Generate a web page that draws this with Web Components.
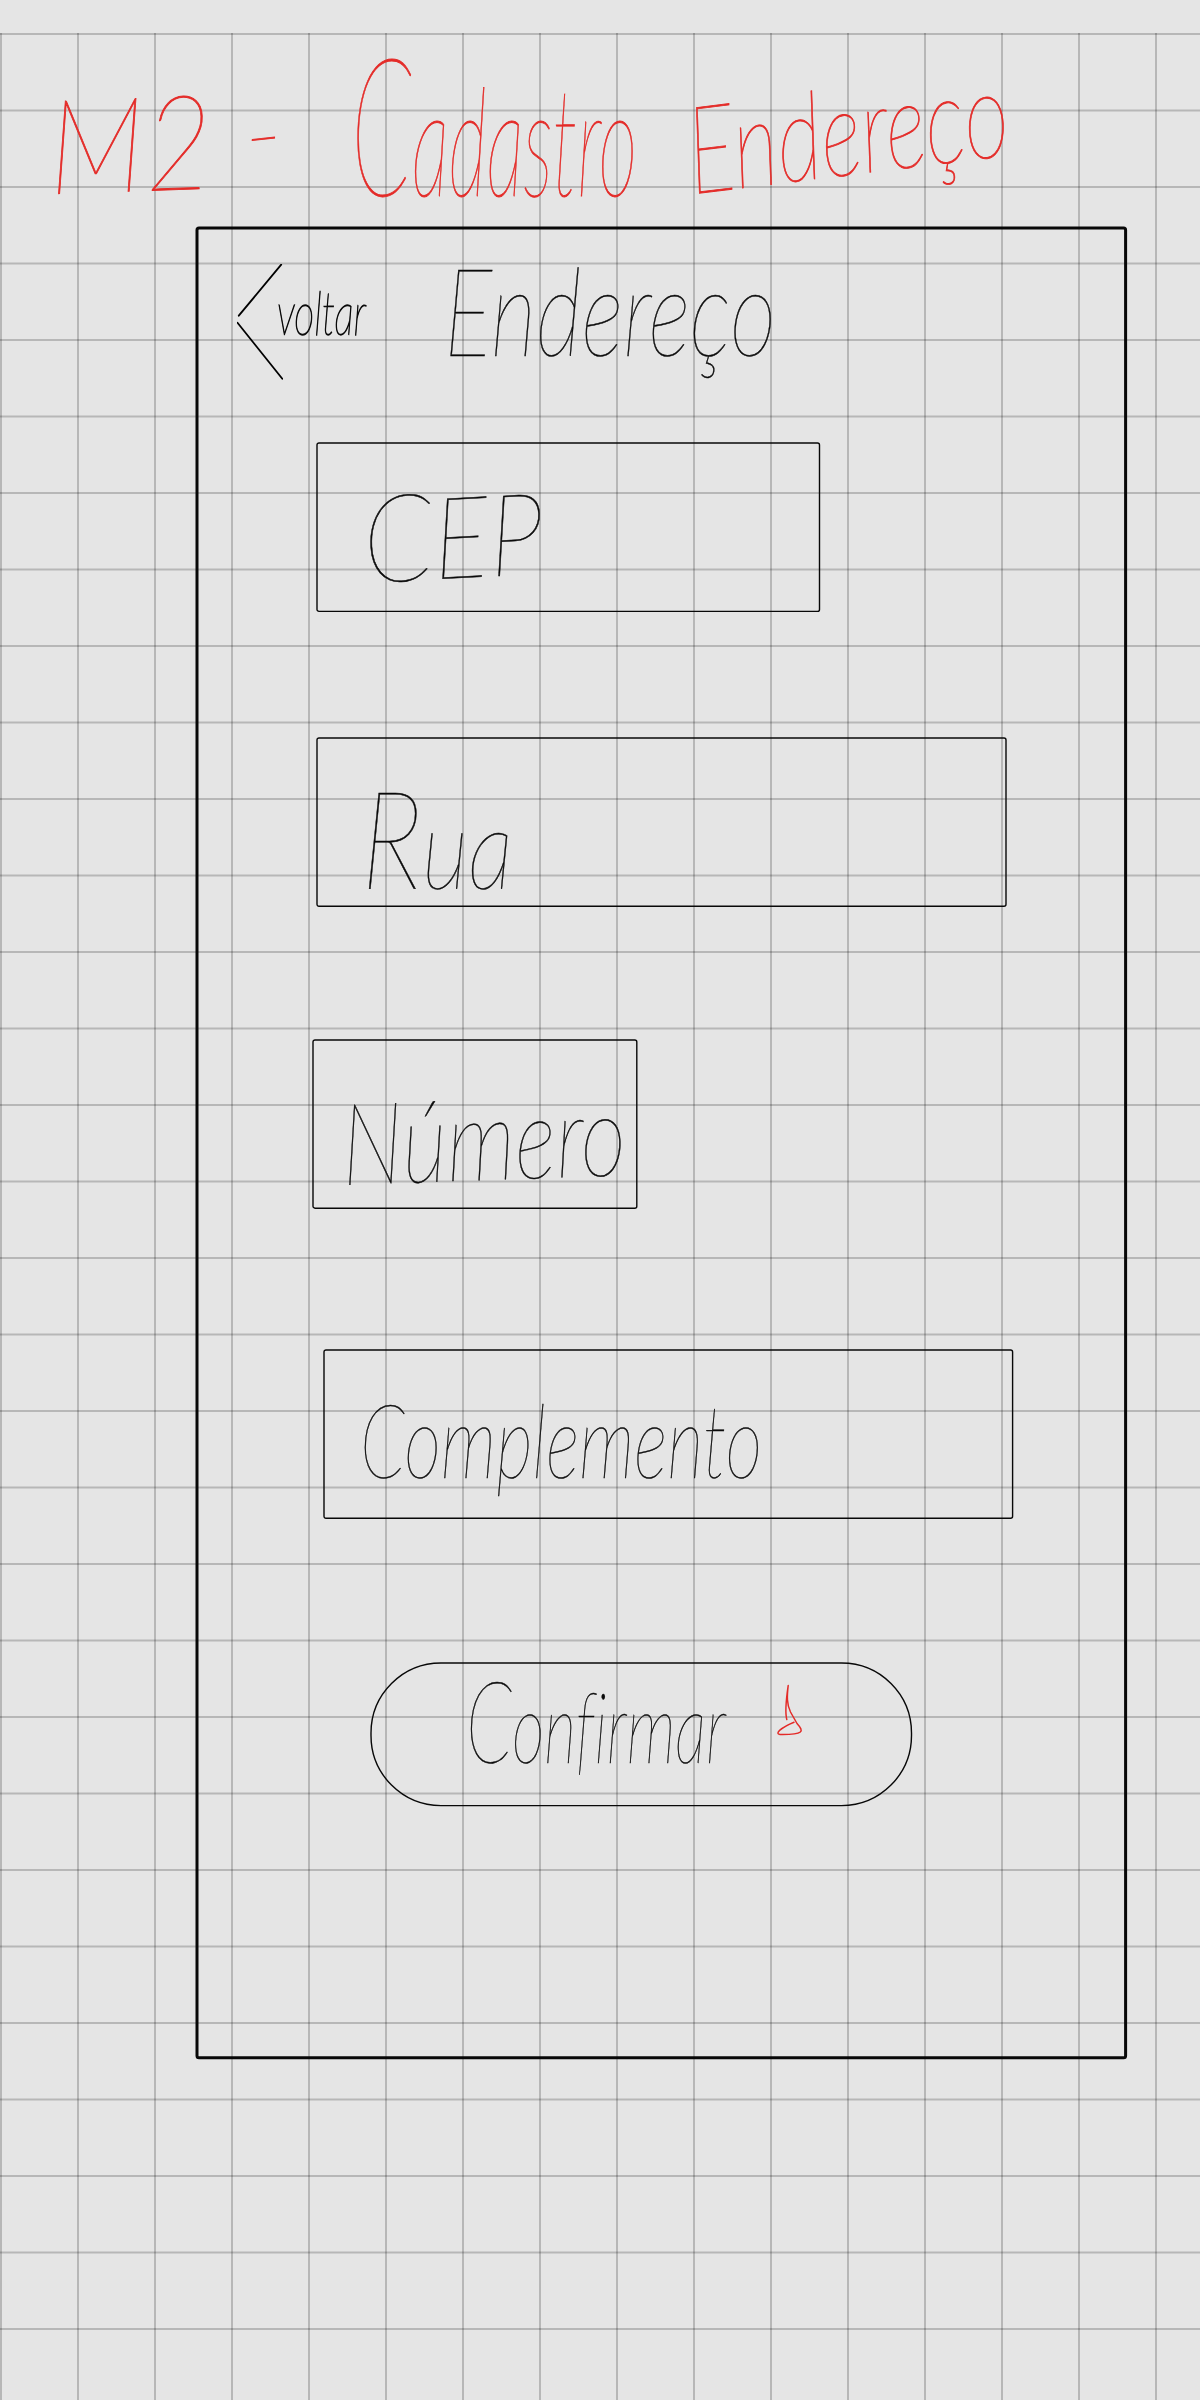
<!DOCTYPE html>
<html lang="pt-BR">
<head>
<meta charset="utf-8">
<title>M2 - Cadastro Endereço</title>
<style>
body{margin:0;background:#e5e5e5}
</style>
</head>
<body>
<address-board></address-board>
<script>
// One handwritten word, fitted to its box width; "cap" sizes its initial apart.
customElements.define('ink-word', class extends HTMLElement {
  connectedCallback() {
    const a = n => this.getAttribute(n);
    const word = a('word');
    const text = a('cap') ? `<tspan font-size="${a('cap')}">${word[0]}</tspan>${word.slice(1)}` : word;
    this.attachShadow({mode: 'open'}).innerHTML = `<style>
      :host{display:block;flex:none;width:${a('w')}px;height:${a('h')}px}
      svg{display:block;overflow:visible}
      text{font-family:Lato,Inter,"Liberation Sans",sans-serif;font-style:italic;font-weight:100;font-variant-ligatures:none;fill:currentColor;stroke:currentColor;stroke-width:${a('bold') || 0.5}}
    </style>
    <svg width="${a('w')}" height="${a('h')}"><text x="0" y="${a('h')}" font-size="${a('size')}" textLength="${a('w')}" lengthAdjust="spacingAndGlyphs" transform="rotate(${a('turn') || 0} 0 ${a('h')})">${text}</text></svg>`;
  }
});

// Outlined box whose content sits on the same grid cell.
customElements.define('sketch-box', class extends HTMLElement {
  connectedCallback() {
    const a = n => this.getAttribute(n);
    this.attachShadow({mode: 'open'}).innerHTML = `<style>
      :host{display:grid;flex:none;width:${a('w')}px;height:${a('h')}px}
      svg,div{grid-area:1/1}
      svg{display:block;overflow:visible}
      div{display:flex;align-items:flex-start;min-width:0}
      :host([column]) div{flex-direction:column}
    </style>
    <svg width="${a('w')}" height="${a('h')}"><rect width="${a('w')}" height="${a('h')}" rx="${a('r') || 2}" fill="none" stroke="#080808" stroke-width="${a('line') || 1.4}"/></svg>
    <div><slot></slot></div>`;
  }
});

customElements.define('back-chevron', class extends HTMLElement {
  connectedCallback() {
    this.attachShadow({mode: 'open'}).innerHTML = `<style>:host{display:block;flex:none;width:46px}svg{display:block}</style>
    <svg width="46" height="116" fill="none" stroke="#000" stroke-width="1.8" stroke-linecap="round"><path d="M44.2 .7 1.8 51.7M.5 58.7 45.3 114.7"/></svg>`;
  }
});

customElements.define('tap-mark', class extends HTMLElement {
  connectedCallback() {
    this.attachShadow({mode: 'open'}).innerHTML = `<style>:host{display:block;flex:none;width:26px}svg{display:block}</style>
    <svg width="26" height="52" fill="none" stroke="#e42b28" stroke-width="1.5" stroke-linecap="round" stroke-linejoin="round"><path d="M9.8 35.6C8 29 9.2 15 11.2 1.5C10 12 9.6 20 13.5 28L20 39.5Q26 46 23.4 48C20 50.5 10 50.6 3 50.5Q-1 50 2.6 46.4Q8 42 17 38.3"/></svg>`;
  }
});

customElements.define('paper-grid', class extends HTMLElement {
  connectedCallback() {
    let columns = '', rows = '';
    for (let x = 1; x < 1200; x += 77) columns += `M${x} 33V2400`;
    for (let y = 34; y < 2400; y += 76.5) rows += `M0 ${y}H1200`;
    this.attachShadow({mode: 'open'}).innerHTML = `<style>:host{display:block}svg{display:block}</style>
    <svg width="1200" height="2400" fill="none" stroke="#000" stroke-opacity=".2" stroke-width="2"><path d="${columns}"/><path d="${rows}"/></svg>`;
  }
});

customElements.define('address-board', class extends HTMLElement {
  connectedCallback() {
    this.attachShadow({mode: 'open'}).innerHTML = `<style>
      :host{display:grid;width:1200px;height:2400px;color:#0a0a0a}
      paper-grid,main{grid-area:1/1}
      main{display:flex;flex-direction:column}
      .title{display:flex;align-items:flex-start;height:227.6px;padding-left:50px;box-sizing:border-box;color:#e42b28}
      .frame{margin-left:196.5px}
      header{display:flex;align-items:flex-start;height:215.7px;padding-left:40.5px;box-sizing:border-box}
      back-chevron{margin-top:36.4px}
    </style>
    <paper-grid></paper-grid>
    <main>
      <div class="title">
        <ink-word word="M2" w="164" h="194" size="132" bold=".9" turn="-2"></ink-word>
        <ink-word word="-" w="40" h="173" size="110" bold=".9" turn="-6" style="margin-left:33px"></ink-word>
        <ink-word word="Cadastro" w="286" h="196" size="150" cap="192" bold=".9" style="margin-left:64px"></ink-word>
        <ink-word word="Endereço" w="322" h="194" size="122" bold=".9" turn="-7" style="margin-left:56px"></ink-word>
      </div>
      <sketch-box class="frame" column w="928.6" h="1829.8" line="3">
        <header>
          <back-chevron></back-chevron>
          <ink-word word="voltar" w="89" h="106.5" size="61" bold="1.3" style="margin-left:-6px"></ink-word>
          <ink-word word="Endereço" w="332" h="128" size="122" style="margin-left:78px"></ink-word>
        </header>
        <sketch-box w="502.5" h="168.4" style="margin-left:120px">
          <ink-word word="CEP" w="180" h="140" size="114" cap="122" turn="-3" style="margin-left:48px"></ink-word>
        </sketch-box>
        <sketch-box w="689" h="168.3" style="margin:126.3px 0 0 120.8px">
          <ink-word word="Rua" w="152" h="151" size="112" cap="136" style="margin-left:44px"></ink-word>
        </sketch-box>
        <sketch-box w="323.8" h="168.2" style="margin:133.5px 0 0 116.7px">
          <ink-word word="Número" w="284" h="145" size="114" turn="-2" style="margin-left:30px"></ink-word>
        </sketch-box>
        <sketch-box w="688.6" h="168.3" style="margin:141.7px 0 0 127.2px">
          <ink-word word="Complemento" w="402" h="128" size="102" style="margin-left:36px"></ink-word>
        </sketch-box>
        <sketch-box w="540.5" h="142.6" r="70" style="margin:144.7px 0 0 174.2px">
          <ink-word word="Confirmar" w="260" h="100" size="98" cap="114" style="margin-left:95px"></ink-word>
          <tap-mark style="margin:21.3px 0 0 51px"></tap-mark>
        </sketch-box>
      </sketch-box>
    </main>`;
  }
});
</script>
</body>
</html>
